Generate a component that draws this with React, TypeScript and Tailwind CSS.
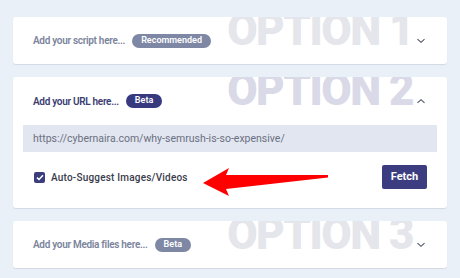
import React from "react";

function ChevronDown() {
  return (
    <svg width="10" height="6" viewBox="0 0 10 6" className="shrink-0">
      <path d="M1.5 1.2 L5 4.3 L8.5 1.2" fill="none" stroke="#4a4f63" strokeWidth="1.1" />
    </svg>
  );
}
function ChevronUp() {
  return (
    <svg width="10" height="6" viewBox="0 0 10 6" className="shrink-0">
      <path d="M1.5 4.8 L5 1.7 L8.5 4.8" fill="none" stroke="#4a4f63" strokeWidth="1.1" />
    </svg>
  );
}

function Watermark({ text, color }: { text: string; color: string }) {
  return (
    <div
      className="absolute right-[34px] top-[-2px] pointer-events-none select-none font-black leading-[31px] tracking-[-1.5px] text-[44px]"
      style={{ color, fontFamily: "Roboto, sans-serif" }}
    >
      {text}
    </div>
  );
}

const label = "relative text-[10px] font-semibold tracking-[-0.3px]";
const badge = "relative ml-[7px] h-[14px] px-[9px] rounded-full text-white text-[9px] font-semibold flex items-center";

export default function App() {
  return (
    <div
      className="w-[460px] h-[278px] bg-[#eaf0f8] px-[13px] pt-[17px] flex flex-col gap-[13px] overflow-hidden"
      style={{ fontFamily: "Roboto, sans-serif" }}
    >
      {/* Option 1 */}
      <div className="relative h-[47px] bg-white rounded-[3px] shadow-[0_1px_1px_#d3d9e4] overflow-hidden flex items-center pl-[20px] pr-[21px]">
        <Watermark text="OPTION 1" color="#e4e6eb" />
        <span className={label + " text-[#7b849c]"}>Add your script here...</span>
        <span className={badge + " bg-[#7e88a4]"}>Recommended</span>
        <div className="relative ml-auto"><ChevronDown /></div>
      </div>

      {/* Option 2 */}
      <div className="relative h-[131px] bg-white rounded-[3px] shadow-[0_1px_1px_#d3d9e4] overflow-hidden flex flex-col px-[10px]">
        <Watermark text="OPTION 2" color="#d9d9e7" />
        <div className="relative h-[48px] flex items-center pl-[10px] pr-[11px]">
          <span className={label + " text-[#3a3c72]"}>Add your URL here...</span>
          <span className={badge + " bg-[#383a7f]"}>Beta</span>
          <div className="ml-auto"><ChevronUp /></div>
        </div>
        <div className="relative h-[27px] bg-[#e2e6f0] flex items-center pl-[10px] text-[10.5px] text-[#6b7082]">
          https://cybernaira.com/why-semrush-is-so-expensive/
        </div>
        <div className="relative flex items-center mt-[13px] pl-[11px] pr-[10px]">
          <div className="w-[11px] h-[11px] rounded-[2px] bg-[#3b3d7c] flex items-center justify-center">
            <svg width="8" height="7" viewBox="0 0 8 7"><path d="M1 3.6 L3 5.5 L7 1.2" fill="none" stroke="white" strokeWidth="1.5" /></svg>
          </div>
          <span className="ml-[6px] text-[10px] font-medium tracking-[0.2px] text-[#3a3c4c]">Auto-Suggest Images/Videos</span>
          <button className="ml-auto w-[45px] h-[24px] bg-[#3b3d80] text-white text-[11px] font-bold rounded-[2px] flex items-center justify-center">Fetch</button>
        </div>
        <svg className="absolute left-[190px] top-[88px]" width="140" height="35" viewBox="0 0 140 35">
          <polygon points="0,18 26,3 23,10 125,10 125,12.5 23,24 26,31" fill="#ff0000" />
        </svg>
      </div>

      {/* Option 3 */}
      <div className="relative h-[47px] bg-white rounded-[3px] shadow-[0_1px_1px_#d3d9e4] overflow-hidden flex items-center pl-[20px] pr-[21px]">
        <Watermark text="OPTION 3" color="#e4e6eb" />
        <span className={label + " text-[#7b849c]"}>Add your Media files here...</span>
        <span className={badge + " bg-[#7e88a4]"}>Beta</span>
        <div className="relative ml-auto"><ChevronDown /></div>
      </div>
    </div>
  );
}
